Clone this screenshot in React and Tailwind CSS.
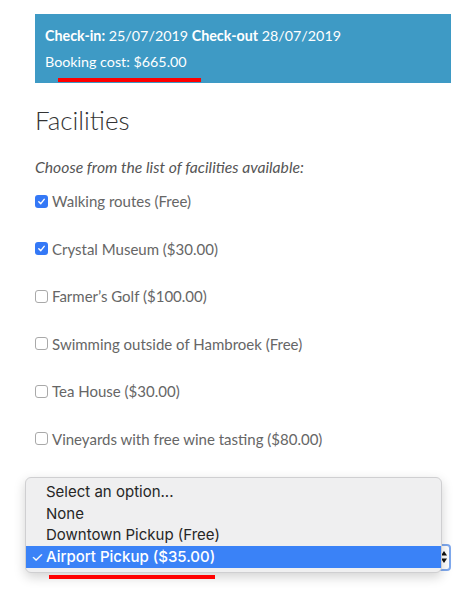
import React from 'react';

const facilities = [
  { label: 'Walking routes (Free)', checked: true },
  { label: 'Crystal Museum ($30.00)', checked: true },
  { label: 'Farmer’s Golf ($100.00)', checked: false },
  { label: 'Swimming outside of Hambroek (Free)', checked: false },
  { label: 'Tea House ($30.00)', checked: false },
  { label: 'Vineyards with free wine tasting ($80.00)', checked: false },
];

const Box = ({ checked }) =>
  checked ? (
    <span className="w-[13px] h-[13px] rounded-[3px] bg-[#3478f6] flex items-center justify-center shrink-0">
      <svg width="9" height="9" viewBox="0 0 10 10" fill="none">
        <path d="M2 5.2 L4.2 7.4 L8 2.6" stroke="white" strokeWidth="1.6" strokeLinecap="round" strokeLinejoin="round" />
      </svg>
    </span>
  ) : (
    <span className="w-[13px] h-[13px] rounded-[3px] border border-[#a9a9a9] bg-white shrink-0" />
  );

export default function App() {
  const sys = { fontFamily: 'Inter, "Liberation Sans", sans-serif' };
  return (
    <div className="w-[476px] h-[602px] bg-white relative overflow-hidden" style={{ fontFamily: 'Lato, "Open Sans", sans-serif' }}>
      <div className="pt-[14px] pl-[35px] w-[451px]">
        <div className="relative bg-[#3e9ac5] text-white text-[14.3px] leading-[26px] pt-[9px] pb-[8px] px-[10px]">
          <div>
            <span className="font-bold">Check-in:</span> 25/07/2019 <span className="font-bold">Check-out</span> 28/07/2019
          </div>
          <div>Booking cost: $665.00</div>
          <div className="absolute left-[23px] top-[64px] w-[143px] h-[4px] bg-[#ff0000]" />
        </div>

        <h2 className="mt-[22px] text-[26px] leading-[30px] font-light text-[#333]">Facilities</h2>

        <p className="mt-[22px] italic text-[15.7px] leading-[20px] text-[#555]">Choose from the list of facilities available:</p>

        <div className="mt-[14px] flex flex-col gap-[27.6px]">
          {facilities.map((f) => (
            <label key={f.label} className="flex items-center gap-[4px] text-[15px] leading-[20px] text-[#666]">
              <Box checked={f.checked} />
              <span>{f.label}</span>
            </label>
          ))}
        </div>

        <div className="mt-[95px] h-[27px] rounded-[4px] border-2 border-[#7fa9ee] flex items-center justify-end pr-[1px]">
          <svg width="8" height="16" viewBox="0 0 8 16">
            <path d="M4 2 L7 6.5 H1 Z" fill="#111" />
            <path d="M4 14 L7 9.5 H1 Z" fill="#111" />
          </svg>
        </div>
      </div>

      <div
        className="absolute left-[25px] top-[477px] w-[417px] h-[96px] rounded-[6px] bg-[#efeff0] border border-[#cfcfd1] shadow-[0_4px_12px_rgba(0,0,0,0.18)] pt-[3px] text-[15px] text-[#262626]"
        style={sys}
      >
        <div className="h-[21.5px] leading-[21.5px] pl-[20px]">Select an option...</div>
        <div className="h-[21.5px] leading-[21.5px] pl-[20px]">None</div>
        <div className="h-[21.5px] leading-[21.5px] pl-[20px]">Downtown Pickup (Free)</div>
        <div className="h-[22px] leading-[22px] bg-[#3a82f7] text-white flex items-center">
          <span className="w-[20px] pl-[5px] text-[14px]">✓</span>
          <span className="font-medium">Airport Pickup ($35.00)</span>
        </div>
      </div>
      <div className="absolute left-[49px] top-[575px] w-[166px] h-[4px] bg-[#ff0000]" />
    </div>
  );
}
